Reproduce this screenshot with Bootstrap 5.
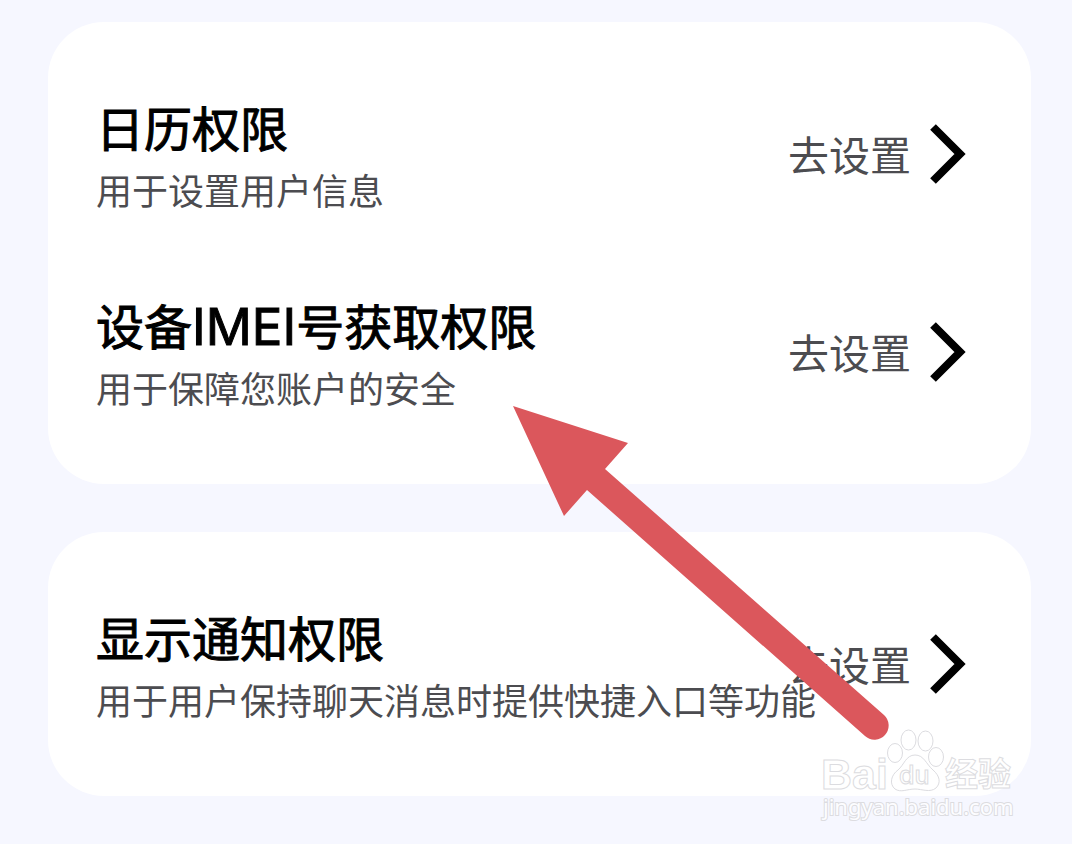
<!DOCTYPE html>
<html lang="zh-CN">
<head>
<meta charset="utf-8">
<meta name="viewport" content="width=device-width, initial-scale=1">
<title>权限设置</title>
<link rel="stylesheet" href="https://cdn.jsdelivr.net/npm/bootstrap@5.3.0/dist/css/bootstrap.min.css">
<style>
body{background:#f6f7ff;color:#000;font-family:Inter,"Noto Sans CJK SC",sans-serif}
.settings{padding:22px 41px 48px 48px;gap:48px}
.group{border-radius:56px;padding:33px 64px 33px 48px}
.perm{height:198px;padding-top:6px}
.perm-title{font-size:48px;line-height:70px;font-weight:400;-webkit-text-stroke:1px #000}
.latin{font-size:51px;line-height:1}
.perm-note{font-size:36px;line-height:54px;color:#4c4c50;white-space:nowrap}
.perm-go{font-size:41px;line-height:60px;color:#4c4c50;text-decoration:none;gap:18px;right:0;top:71px}
.perm-go svg{margin-top:-4px}
.pointer{left:512px;top:405px}
.brand{right:52px;bottom:20px}
.brand .outline{fill:#fff;stroke:#dcdce0;stroke-width:1}
.brand .address{fill:#fdfdff;stroke:#dcdce0;stroke-width:2;paint-order:stroke}
</style>
</head>
<body>
<main class="settings position-relative d-flex flex-column">
  <section class="group bg-white">
    <div class="perm position-relative d-flex flex-column justify-content-center">
      <h2 class="perm-title mb-0">日历权限</h2>
      <p class="perm-note mb-0">用于设置用户信息</p>
      <a class="perm-go position-absolute d-flex align-items-center" href="#calendar">去设置<svg width="38" height="62" viewBox="0 0 38 62" fill="none" stroke="#000" stroke-width="8" aria-hidden="true"><path d="M4 4 31 31 4 58"/></svg></a>
    </div>
    <div class="perm position-relative d-flex flex-column justify-content-center">
      <h2 class="perm-title mb-0">设备<span class="latin">IMEI</span>号获取权限</h2>
      <p class="perm-note mb-0">用于保障您账户的安全</p>
      <a class="perm-go position-absolute d-flex align-items-center" href="#imei">去设置<svg width="38" height="62" viewBox="0 0 38 62" fill="none" stroke="#000" stroke-width="8" aria-hidden="true"><path d="M4 4 31 31 4 58"/></svg></a>
    </div>
  </section>
  <section class="group bg-white">
    <div class="perm position-relative d-flex flex-column justify-content-center">
      <h2 class="perm-title mb-0">显示通知权限</h2>
      <p class="perm-note mb-0">用于用户保持聊天消息时提供快捷入口等功能</p>
      <a class="perm-go position-absolute d-flex align-items-center" href="#notice">去设置<svg width="38" height="62" viewBox="0 0 38 62" fill="none" stroke="#000" stroke-width="8" aria-hidden="true"><path d="M4 4 31 31 4 58"/></svg></a>
    </div>
  </section>
  <svg class="pointer position-absolute pe-none" width="380" height="340" viewBox="512 405 380 340" fill="#db575c" aria-hidden="true"><path d="M513 406 628 443 605 469 884 715A14 14 0 0 1 865 736L587 490 564 516Z"/></svg>
  <svg class="brand position-absolute pe-none" width="204" height="100" viewBox="816 724 204 100" role="img" aria-label="Baidu 经验">
    <g class="outline">
      <text x="821" y="789" font-family="Liberation Sans, sans-serif" font-weight="700" font-size="43">Bai</text>
      <ellipse cx="895" cy="753" rx="7.5" ry="9.5"/><ellipse cx="908.5" cy="740" rx="7.5" ry="10"/><ellipse cx="925.5" cy="741" rx="7.5" ry="10"/><ellipse cx="936" cy="757" rx="7.5" ry="9.5"/>
      <path d="M915 755C924 755 926 764 933 770C940 776 941 783 936 788C930 793 922 789 915 789C907 789 901 793 895 789C889 784 891 775 898 770C904 765 906 755 915 755Z"/>
      <text x="899" y="784" font-family="Inter, sans-serif" font-weight="500" font-size="25">du</text>
      <text x="945" y="786" font-family="Noto Sans CJK SC, sans-serif" font-weight="700" font-size="33">经验</text>
    </g>
    <text class="address" x="823" y="815" font-family="Noto Sans, sans-serif" font-size="22">jingyan.baidu.com</text>
  </svg>
</main>
<script src="https://cdn.jsdelivr.net/npm/bootstrap@5.3.0/dist/js/bootstrap.bundle.min.js"></script>
</body>
</html>
